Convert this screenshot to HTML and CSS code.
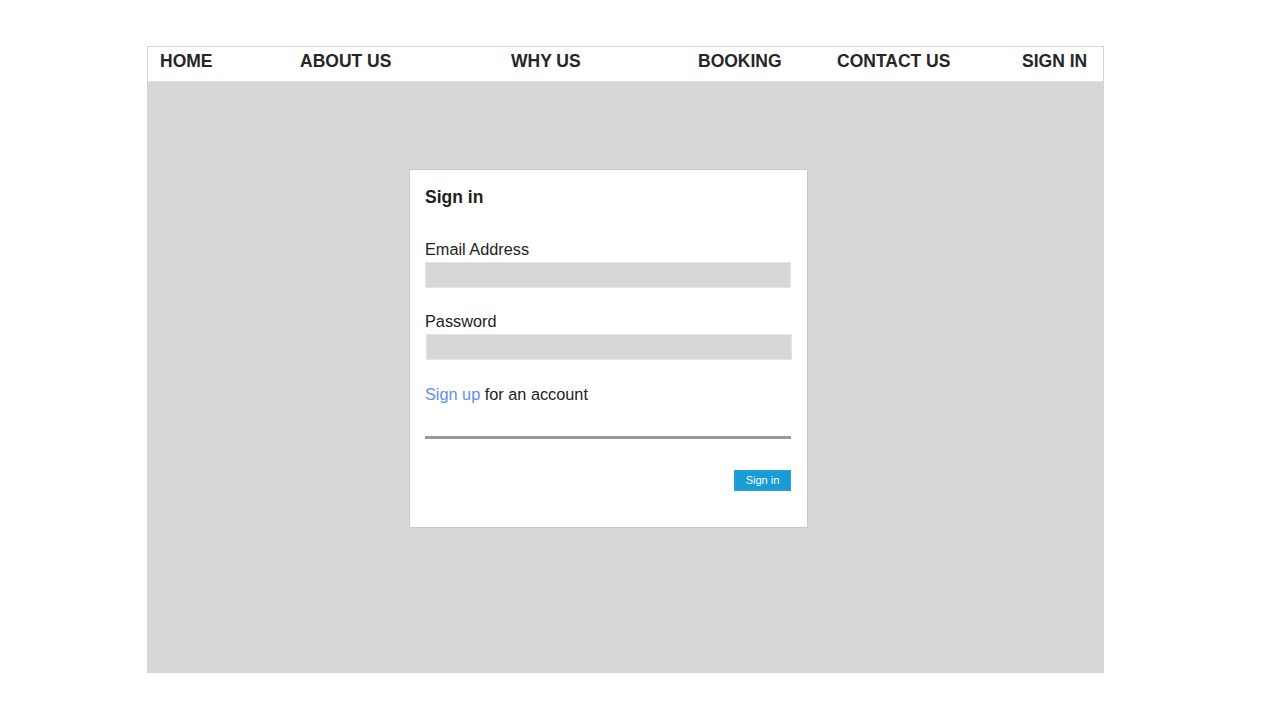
FILE: index.html
```html
<!DOCTYPE html>
<html>
<head>
<meta charset="utf-8">
<title>Sign in</title>
<link rel="stylesheet" href="styles.css">
</head>
<body>
<div class="frame">
  <nav class="nav">
    <a class="nav-item">HOME</a>
    <a class="nav-item">ABOUT US</a>
    <a class="nav-item">WHY US</a>
    <a class="nav-item">BOOKING</a>
    <a class="nav-item">CONTACT US</a>
    <a class="nav-item">SIGN IN</a>
  </nav>
  <main class="stage">
    <form class="card">
      <h2 class="card-title">Sign in</h2>
      <label class="field-label">Email Address</label>
      <div class="input"></div>
      <label class="field-label second">Password</label>
      <div class="input shifted"></div>
      <p class="signup"><a class="link">Sign up</a> for an account</p>
      <hr class="rule">
      <div class="actions"><button type="button" class="btn">Sign in</button></div>
    </form>
  </main>
</div>
</body>
</html>
```
FILE: styles.css
```css
* { box-sizing: border-box; }
html, body { margin: 0; padding: 0; background: #ffffff; }
body { font-family: "Liberation Sans", Arial, sans-serif; color: #222222; }

.frame {
  margin: 46px 0 0 147px;
  width: 957px;
  height: 627px;
  border: 1px solid #d4d4d4;
  display: flex;
  flex-direction: column;
}

.nav {
  height: 35px;
  background: #ffffff;
  display: grid;
  grid-template-columns: 140px 211px 187px 139px 185px 1fr;
  padding: 4px 0 0 12px;
  border-bottom: 1px solid #e2e2e2;
}
.nav-item {
  font-size: 17.5px;
  font-weight: bold;
  line-height: 20px;
  color: #262626;
  white-space: nowrap;
}

.stage {
  flex: 1;
  background: #d7d7d7;
  padding: 87px 0 0 261px;
}

.card {
  width: 399px;
  background: #ffffff;
  border: 1px solid #c9c9c9;
  padding: 16px 16px 36px 15px;
  display: flex;
  flex-direction: column;
}
.card-title {
  margin: 0;
  font-size: 17.5px;
  font-weight: bold;
  line-height: 22px;
  color: #222222;
}
.field-label {
  margin-top: 31px;
  font-size: 16.3px;
  line-height: 20px;
  color: #222222;
}
.field-label.second { margin-top: 23px; }
.input {
  margin-top: 3px;
  height: 26px;
  background: #d7d7d7;
  border: 1px solid #e4e4e4;
}
.input.shifted { margin-left: 1px; margin-right: -1px; }
.signup {
  margin: 24px 0 0 0;
  font-size: 16.3px;
  line-height: 20px;
  color: #222222;
}
.link { color: #5f8ef5; }
.rule {
  margin: 32px 0 0 0;
  height: 3px;
  border: none;
  background: #999999;
}
.actions {
  margin-top: 31px;
  display: flex;
  justify-content: flex-end;
}
.btn {
  width: 57px;
  height: 21px;
  padding: 0;
  border: 1px solid #2aa0d8;
  background: #199bd6;
  color: #ffffff;
  font-family: "Liberation Sans", Arial, sans-serif;
  font-size: 11px;
  line-height: 19px;
}
```
